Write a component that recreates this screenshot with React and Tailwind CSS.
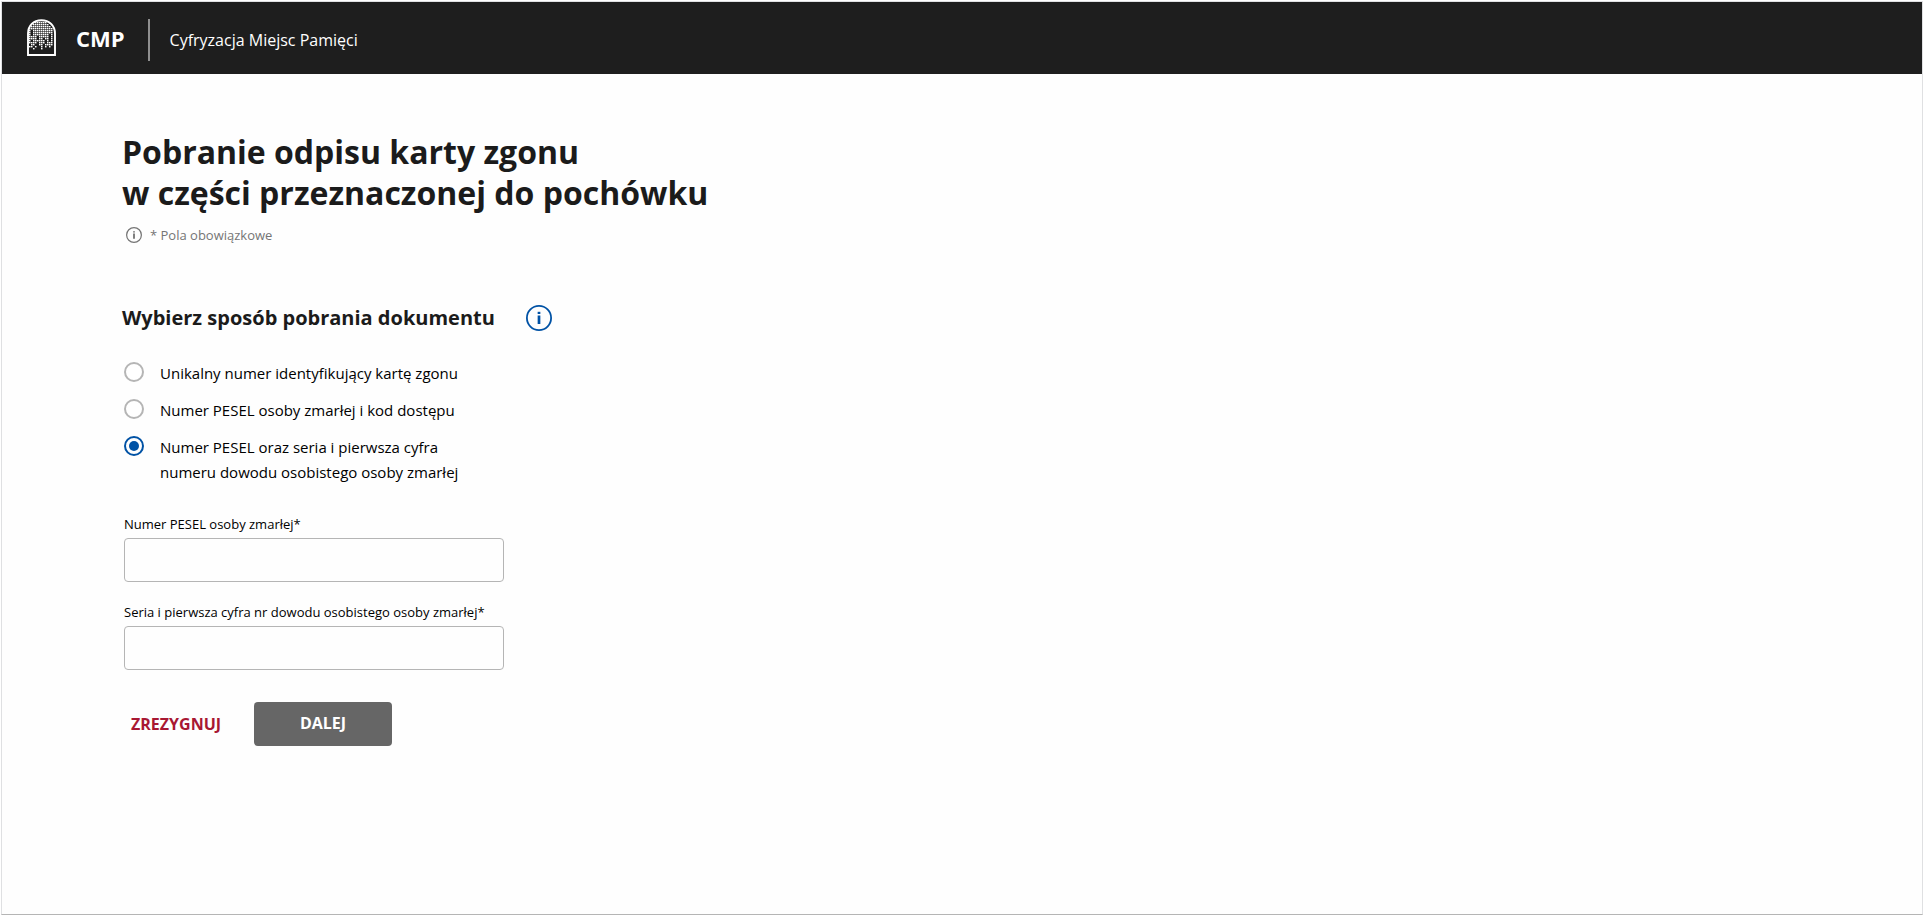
import { useState } from "react";

const MOSAIC = [
  "...######...",
  "..########..",
  ".##########.",
  "############",
  "#.##########",
  "#.##########",
  "#.########.#",
  "####.#####.#",
  "####.##.##.#",
  "#.######.#.#",
  "####.###.###",
  ".##..##.####",
  "##.#..#.#.#.",
  "..#...#.....",
];

function Logo() {
  return (
    <svg width="30" height="38" viewBox="0 0 30 38" aria-hidden="true">
      <g fill="#fff">
        {MOSAIC.map((row, y) =>
          row.split("").map((cell, x) =>
            cell === "#" ? <rect key={`${x}-${y}`} x={3 + x * 2} y={3 + y * 2} width="1.5" height="1.4" /> : null,
          ),
        )}
      </g>
      <path d="M2 36V14.5C2 6.8 7.4 1.2 15.4 1.2S29 6.8 29 14.5V36Z" fill="none" stroke="#fff" strokeWidth="1.9" />
    </svg>
  );
}

function InfoIcon({ size, stroke }) {
  return (
    <svg width={size} height={size} viewBox="0 0 26 26" fill="none" stroke="currentColor" strokeWidth={stroke} aria-hidden="true">
      <circle cx="13" cy="13" r={13 - stroke / 2} />
      <path d="M13 10.5V19" strokeWidth={stroke * 1.5} />
      <path d="M13 6.8V9" strokeWidth={stroke * 1.5} />
    </svg>
  );
}

const METHODS = [
  { id: "unique", lines: ["Unikalny numer identyfikujący kartę zgonu"] },
  { id: "code", lines: ["Numer PESEL osoby zmarłej i kod dostępu"] },
  { id: "series", lines: ["Numer PESEL oraz seria i pierwsza cyfra", "numeru dowodu osobistego osoby zmarłej"] },
];

const FIELDS = [
  { id: "pesel", label: "Numer PESEL osoby zmarłej*" },
  { id: "idSeries", label: "Seria i pierwsza cyfra nr dowodu osobistego osoby zmarłej*" },
];

export default function App() {
  const [method, setMethod] = useState("series");

  return (
    <div className="min-h-screen bg-white p-px font-['Open_Sans',sans-serif]">
      <div className="flex min-h-[calc(100vh-2px)] flex-col border border-[#dfe0e2] border-b-[#b5b5b5] bg-[#fefefe]">
        <header className="flex h-18 items-center bg-[#1e1e1e] pl-6 text-white">
          <Logo />
          <span className="ml-5 text-[22px] font-bold">CMP</span>
          <div className="ml-[23px] flex items-center gap-5 pt-1">
            <span className="h-[42px] w-0.5 bg-[#8f8f8f]" />
            <span className="text-base">Cyfryzacja Miejsc Pamięci</span>
          </div>
        </header>

        <main className="px-30 pt-[57px] pb-10">
          <h1 className="text-[32px] leading-[41px] font-bold text-[#1b1b1b]">
            Pobranie odpisu karty zgonu
            <br />w części przeznaczonej do pochówku
          </h1>
          <p className="mt-3 flex items-center gap-2 pl-1 text-[13px] leading-5 text-[#757575]">
            <InfoIcon size={16} stroke={2} />* Pola obowiązkowe
          </p>

          <form onSubmit={(e) => e.preventDefault()}>
            <fieldset>
              <legend className="flex items-center gap-[31px] pt-[59px] text-xl font-bold text-[#1b1b1b]">
                Wybierz sposób pobrania dokumentu
                <button type="button" aria-label="Informacja" className="text-[#0052a5]">
                  <InfoIcon size={26} stroke={1.8} />
                </button>
              </legend>
              <div className="mt-[29px] flex flex-col gap-3 pl-0.5">
                {METHODS.map(({ id, lines }) => (
                  <label key={id} className="flex items-start gap-4 text-[15px] leading-[25px] text-black">
                    <input
                      type="radio"
                      name="method"
                      value={id}
                      checked={method === id}
                      onChange={() => setMethod(id)}
                      className="mt-px size-5 shrink-0 appearance-none rounded-full border-2 border-[#b5b5b5] bg-white checked:border-[#0052a5] checked:bg-[#0052a5] checked:bg-clip-content checked:p-[3px]"
                    />
                    <span>
                      {lines.map((line) => (
                        <span key={line} className="block">{line}</span>
                      ))}
                    </span>
                  </label>
                ))}
              </div>
            </fieldset>

            <div className="mt-[29px] flex flex-col gap-5 pl-0.5">
              {FIELDS.map(({ id, label }) => (
                <div key={id} className="flex flex-col gap-1">
                  <label htmlFor={id} className="text-[13px] leading-5 text-black">{label}</label>
                  <input id={id} type="text" className="h-11 w-95 max-w-full rounded-sm border border-[#b5b5b5] px-3" />
                </div>
              ))}
            </div>

            <div className="mt-8 flex items-center pl-0.5">
              <button type="button" className="px-[7px] text-base font-bold text-[#a81732]">ZREZYGNUJ</button>
              <button type="submit" className="ml-[26px] h-11 w-[138px] rounded-sm bg-[#666] pb-0.5 text-base font-bold text-white">DALEJ</button>
            </div>
          </form>
        </main>
      </div>
    </div>
  );
}
